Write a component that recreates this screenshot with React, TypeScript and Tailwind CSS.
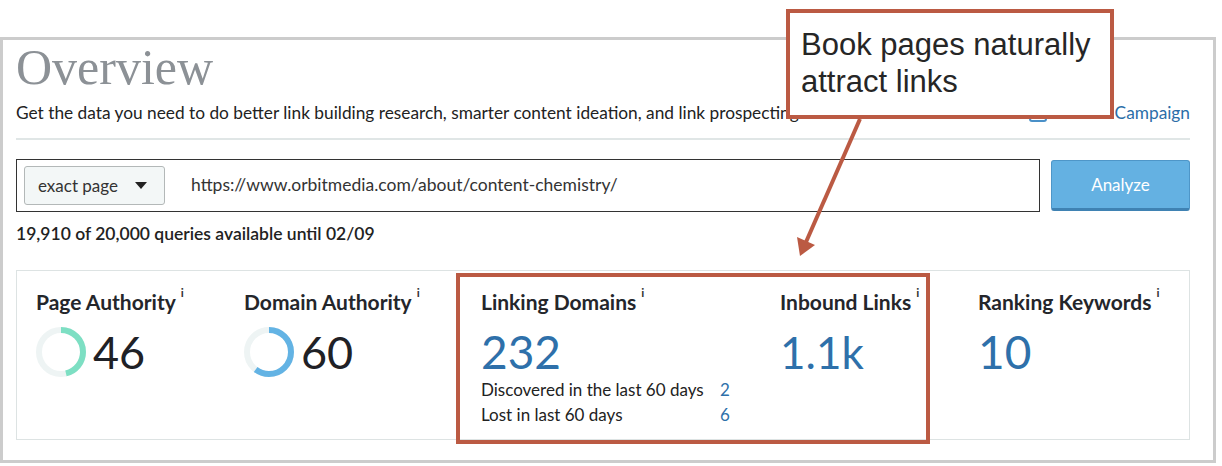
import React from "react";

const lato = { fontFamily: "Lato, 'Open Sans', sans-serif" };

const Donut = ({ pct, color }: { pct: number; color: string }) => {
  const r = 22;
  const c = 2 * Math.PI * r;
  return (
    <svg width="50" height="50" viewBox="0 0 50 50" className="shrink-0">
      <circle cx="25" cy="25" r={r} fill="none" stroke="#eef4f4" strokeWidth="6" />
      <circle
        cx="25"
        cy="25"
        r={r}
        fill="none"
        stroke={color}
        strokeWidth="6"
        strokeDasharray={`${(c * pct) / 100} ${c}`}
        transform="rotate(-90 25 25)"
      />
    </svg>
  );
};

const Label = ({ text }: { text: string }) => (
  <div className="flex items-start text-[21px] font-bold text-[#24262b] leading-[24px] whitespace-nowrap">
    {text}
    <span className="ml-[5px] -mt-[3px] text-[12px] font-bold leading-none text-[#333]">i</span>
  </div>
);

export default function App() {
  return (
    <div className="relative w-[1222px] h-[466px] bg-white overflow-hidden" style={lato}>
      <div className="mt-[37px] w-[1216px] h-[426px] border-[3px] border-[#cccccc] pl-[13px] pr-[23px] flex flex-col">
        <h1 className="mt-[2px] text-[50px] leading-[50px] text-[#8c9196]" style={{ fontFamily: "'Liberation Serif', serif" }}>
          Overview
        </h1>

        <div className="mt-[9px] flex items-center justify-between text-[17.3px] leading-[24px] text-[#222]">
          <p className="whitespace-nowrap">
            Get the data you need to do better link building research, smarter content ideation, and link prospecting.
          </p>
          <div className="flex items-center gap-2 text-[#2b6ea8]">
            <span className="w-[18px] h-[18px] rounded-[3px] border-2 border-[#4a90c8]" />
            <span className="text-[#222]">Add to</span>
            <span>Campaign</span>
          </div>
        </div>

        <div className="mt-[13px] h-[2px] bg-[#e0e6e6]" />

        <div className="mt-[19px] flex gap-[11px] items-center">
          <div className="flex-1 h-[53px] border border-[#333] flex items-center pl-[7px]">
            <div className="w-[141px] h-[39px] bg-[#f3f7f7] border border-[#b3b8b8] rounded-[3px] flex items-center pl-[13px] gap-[17px] text-[17px] text-[#333]">
              exact page
              <span className="w-0 h-0 border-l-[6px] border-r-[6px] border-t-[7px] border-l-transparent border-r-transparent border-t-[#222]" />
            </div>
            <span className="ml-[26px] text-[17.5px] text-[#333]">https://www.orbitmedia.com/about/content-chemistry/</span>
          </div>
          <button className="w-[139px] h-[51px] bg-[#64b1e2] border border-[#4e96c8] border-b-[3px] border-b-[#3f82b3] rounded-[3px] text-white text-[17px]">
            Analyze
          </button>
        </div>

        <p className="mt-[10px] text-[17.5px] leading-[24px] font-semibold text-[#222]">19,910 of 20,000 queries available until 02/09</p>

        <div className="mt-[24px] h-[170px] border border-[#dde3e3] pl-[19px] pt-[19px] grid grid-cols-[208px_237px_299px_198px_1fr]">
          <div>
            <Label text="Page Authority" />
            <div className="mt-[13px] flex items-center gap-[7px]">
              <Donut pct={46} color="#7ddfc3" />
              <span className="text-[45px] leading-[46px] text-[#1f2126]">46</span>
            </div>
          </div>
          <div>
            <Label text="Domain Authority" />
            <div className="mt-[13px] flex items-center gap-[7px]">
              <Donut pct={60} color="#63b3e4" />
              <span className="text-[45px] leading-[46px] text-[#1f2126]">60</span>
            </div>
          </div>
          <div>
            <Label text="Linking Domains" />
            <div className="mt-[15px] text-[46px] leading-[46px] text-[#2e70aa]">232</div>
            <div className="mt-[2px] grid grid-cols-[239px_auto] text-[17px] leading-[25px] text-[#222]">
              <span>Discovered in the last 60 days</span>
              <span className="text-[#2e70aa]">2</span>
              <span>Lost in last 60 days</span>
              <span className="text-[#2e70aa]">6</span>
            </div>
          </div>
          <div>
            <Label text="Inbound Links" />
            <div className="mt-[15px] text-[44px] leading-[46px] text-[#2e70aa]">1.1k</div>
          </div>
          <div>
            <Label text="Ranking Keywords" />
            <div className="mt-[15px] text-[46px] leading-[46px] text-[#2e70aa]">10</div>
          </div>
        </div>
      </div>

      {/* annotation: highlight box */}
      <div className="absolute left-[456px] top-[273px] w-[474px] h-[171px] border-4 border-[#bb5a43]" />

      {/* annotation: callout */}
      <div
        className="absolute left-[786px] top-[9px] w-[328px] h-[110px] bg-white border-4 border-[#bb5a43] pl-[11px] pt-[13px] text-[31px] leading-[37px] text-[#262626]"
        style={{ fontFamily: "'Liberation Sans', Arial, sans-serif" }}
      >
        Book pages naturally
        <br />
        attract links
      </div>

      {/* annotation: arrow */}
      <svg className="absolute left-0 top-0" width="1222" height="466">
        <line x1="860" y1="119" x2="806" y2="242" stroke="#bb5a43" strokeWidth="4" />
        <polygon points="797,237 815,245 800,256" fill="#bb5a43" />
      </svg>
    </div>
  );
}
